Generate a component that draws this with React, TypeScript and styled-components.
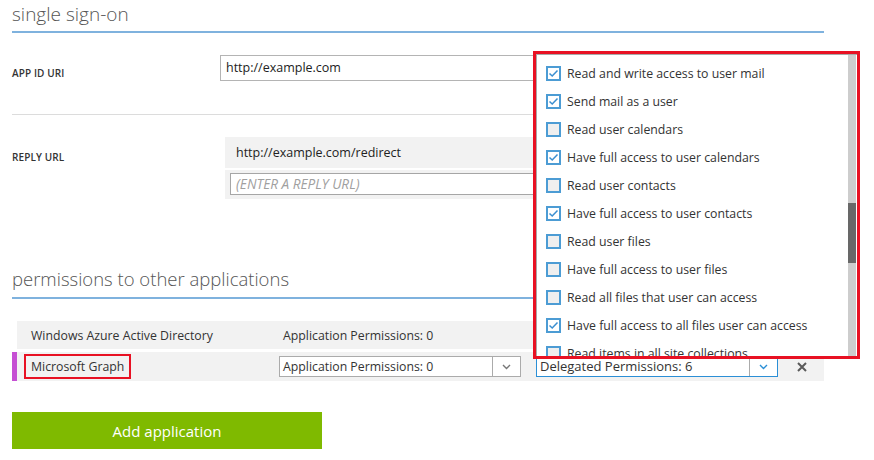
import React from "react";
import styled, { createGlobalStyle } from "styled-components";

const FONT = `"Open Sans", "Segoe UI", "Noto Sans", sans-serif`;

const Global = createGlobalStyle`
  html, body { margin: 0; padding: 0; background: #fff; }
  body { font-family: ${FONT}; color: #333; }
  * { box-sizing: border-box; }
`;

const Page = styled.div`
  position: relative;
  width: 874px;
  height: 460px;
  overflow: hidden;
  padding: 0 50px 0 12px;
`;

const SectionTitle = styled.h2<{ $top?: number; $size: number; $pad: number }>`
  margin: ${(p) => p.$top ?? 0}px 0 0 0;
  height: 33px;
  padding-top: ${(p) => p.$pad}px;
  font-size: ${(p) => p.$size}px;
  font-weight: 300;
  line-height: 26px;
  color: #555;
  border-bottom: 2px solid #7fb2de;
`;

const FieldRow = styled.div<{ $h: number; $divider?: boolean }>`
  display: grid;
  grid-template-columns: 205px 1fr;
  height: ${(p) => p.$h}px;
  border-bottom: ${(p) => (p.$divider ? "1px solid #dcdcdc" : "none")};
`;

const FieldLabel = styled.div<{ $top: number }>`
  padding-top: ${(p) => p.$top}px;
  font-size: 10px;
  font-weight: 600;
  line-height: 14px;
  color: #333;
  letter-spacing: 0.1px;
`;

const FieldValues = styled.div<{ $top: number }>`
  padding-top: ${(p) => p.$top}px;
  display: flex;
  flex-direction: column;
  gap: 2px;
`;

const TextInput = styled.div`
  margin-left: 3px;
  height: 26px;
  border: 1px solid #b4b4b4;
  padding: 0 5px;
  font-size: 12.5px;
  line-height: 24px;
  color: #222;
`;

const ValueBox = styled.div`
  margin-left: 8px;
  height: 31px;
  background: #f2f2f2;
  padding: 0 11px;
  font-size: 12.5px;
  line-height: 31px;
  color: #222;
`;

const EntryBox = styled.div`
  margin-left: 8px;
  height: 29px;
  background: #f2f2f2;
  padding: 3px 0 4px 5px;
`;

const PlaceholderInput = styled.div`
  height: 22px;
  border: 1px solid #a6a6a6;
  background: #fff;
  padding: 0 5px;
  font-size: 13.6px;
  line-height: 20px;
  font-style: italic;
  color: #a0a0a0;
  white-space: nowrap;
`;

const Table = styled.div`
  margin-top: 22px;
  display: flex;
  flex-direction: column;
  gap: 3px;
`;

const AppRow = styled.div<{ $active?: boolean; $h: number }>`
  display: grid;
  grid-template-columns: 5px 262px 257px 241px 1fr;
  align-items: center;
  height: ${(p) => p.$h}px;
  background: linear-gradient(
    to right,
    ${(p) => (p.$active ? "#c54fd3" : "#fff")} 0 5px,
    #f2f2f2 5px
  );
  font-size: 12.3px;
  color: #333;
`;

const NameCell = styled.div<{ $pad: number }>`
  padding-left: ${(p) => p.$pad}px;
  white-space: nowrap;
`;

const Highlight = styled.span`
  display: inline-block;
  border: 2px solid #e81123;
  padding: 0 5px;
  line-height: 21px;
`;

const PlainCell = styled.div`
  padding-left: 4px;
  white-space: nowrap;
`;

const Select = styled.div<{ $focus?: boolean; $w: number; $size: number }>`
  width: ${(p) => p.$w}px;
  height: 21px;
  display: flex;
  align-items: stretch;
  background: #fff;
  border: 1px solid ${(p) => (p.$focus ? "#2b8fd6" : "#ababab")};
  font-size: ${(p) => p.$size}px;
`;

const SelectText = styled.div`
  flex: 1;
  padding-left: 3px;
  line-height: 19px;
  white-space: nowrap;
  overflow: hidden;
`;

const SelectArrow = styled.div`
  width: 28px;
  border-left: 1px solid #ababab;
  display: flex;
  align-items: center;
  justify-content: center;
`;

const CloseCell = styled.div`
  display: flex;
  align-items: center;
  padding-left: 20px;
`;

const AddButton = styled.button`
  margin-top: 31px;
  width: 310px;
  height: 37px;
  border: none;
  background: #7fba00;
  color: #fff;
  font-family: ${FONT};
  font-size: 15px;
  cursor: pointer;
`;

/* dropdown overlay */
const Popup = styled.div`
  position: absolute;
  left: 533px;
  top: 51px;
  width: 327px;
  height: 308px;
  border: 3px solid #e81123;
  background: #fff;
`;

const Panel = styled.div`
  height: 100%;
  display: flex;
  border-top: 1px solid #a9a9a9;
  border-left: 1px solid #a9a9a9;
  overflow: hidden;
`;

const List = styled.ul`
  flex: 1;
  margin: 0;
  padding: 4px 0 0 9px;
  list-style: none;
  overflow: hidden;
`;

const Item = styled.li`
  height: 28px;
  display: flex;
  align-items: center;
  gap: 6px;
  font-size: 12.3px;
  color: #333;
  white-space: nowrap;
`;

const Box = styled.span<{ $checked: boolean }>`
  flex: none;
  width: 15px;
  height: 15px;
  border: 2px solid #4c9cd4;
  background: ${(p) => (p.$checked ? "#fff" : "#efefef")};
  display: flex;
  align-items: center;
  justify-content: center;
`;

const Track = styled.div`
  width: 8px;
  margin-right: 1px;
  background: #cdcdcd;
  display: flex;
  flex-direction: column;
`;

const Thumb = styled.div`
  margin-top: 148px;
  height: 60px;
  background: #686868;
`;

const Chevron = ({ color }: { color: string }) => (
  <svg width="9" height="6" viewBox="0 0 9 6">
    <path d="M1 1 L4.5 4.5 L8 1" fill="none" stroke={color} strokeWidth="1.4" />
  </svg>
);

const CloseIcon = () => (
  <svg width="10" height="10" viewBox="0 0 10 10">
    <path d="M1 1 L9 9 M9 1 L1 9" stroke="#5a5a5a" strokeWidth="2" />
  </svg>
);

const Check = () => (
  <svg width="11" height="11" viewBox="0 0 11 11">
    <path d="M1.5 5.5 L4.2 8 L9.5 2.5" fill="none" stroke="#3b8fd0" strokeWidth="1.5" />
  </svg>
);

const permissions: [string, boolean][] = [
  ["Read and write access to user mail", true],
  ["Send mail as a user", true],
  ["Read user calendars", false],
  ["Have full access to user calendars", true],
  ["Read user contacts", false],
  ["Have full access to user contacts", true],
  ["Read user files", false],
  ["Have full access to user files", false],
  ["Read all files that user can access", false],
  ["Have full access to all files user can access", true],
  ["Read items in all site collections", false],
];

export default function App() {
  return (
    <>
      <Global />
      <Page>
        <SectionTitle $size={19} $pad={1}>single sign-on</SectionTitle>
        <FieldRow $h={82} $divider>
          <FieldLabel $top={33}>APP ID URI</FieldLabel>
          <FieldValues $top={22}>
            <TextInput>http://example.com</TextInput>
          </FieldValues>
        </FieldRow>
        <FieldRow $h={86}>
          <FieldLabel $top={35}>REPLY URL</FieldLabel>
          <FieldValues $top={22}>
            <ValueBox>http://example.com/redirect</ValueBox>
            <EntryBox>
              <PlaceholderInput>(ENTER A REPLY URL)</PlaceholderInput>
            </EntryBox>
          </FieldValues>
        </FieldRow>

        <SectionTitle $top={65} $size={18.5} $pad={0}>
          permissions to other applications
        </SectionTitle>

        <Table>
          <AppRow $h={28}>
            <span />
            <NameCell $pad={14}>Windows Azure Active Directory</NameCell>
            <PlainCell>Application Permissions: 0</PlainCell>
            <span />
            <span />
          </AppRow>
          <AppRow $active $h={29}>
            <span />
            <NameCell $pad={7}>
              <Highlight>Microsoft Graph</Highlight>
            </NameCell>
            <Select $w={242} $size={12.3}>
              <SelectText>Application Permissions: 0</SelectText>
              <SelectArrow>
                <Chevron color="#777" />
              </SelectArrow>
            </Select>
            <Select $w={242} $size={13} $focus>
              <SelectText>Delegated Permissions: 6</SelectText>
              <SelectArrow>
                <Chevron color="#2b8fd6" />
              </SelectArrow>
            </Select>
            <CloseCell>
              <CloseIcon />
            </CloseCell>
          </AppRow>
        </Table>

        <AddButton>Add application</AddButton>

        <Popup>
          <Panel>
            <List>
              {permissions.map(([label, checked]) => (
                <Item key={label}>
                  <Box $checked={checked}>{checked && <Check />}</Box>
                  {label}
                </Item>
              ))}
            </List>
            <Track>
              <Thumb />
            </Track>
          </Panel>
        </Popup>
      </Page>
    </>
  );
}
